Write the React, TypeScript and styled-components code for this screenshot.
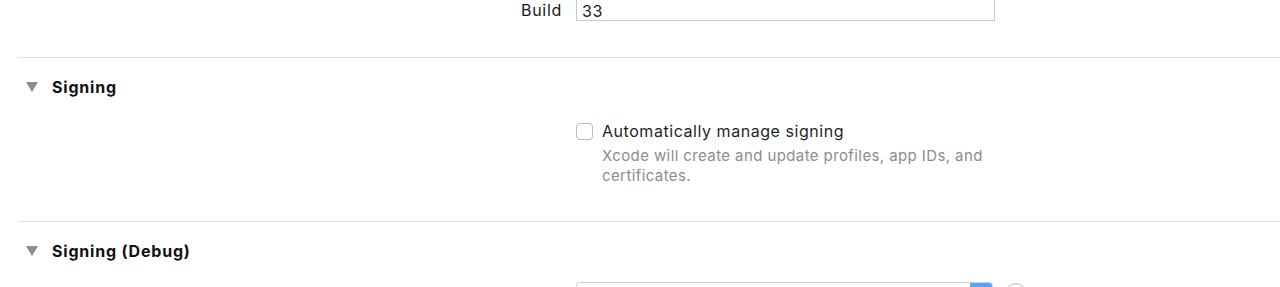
import React from "react";
import styled, { createGlobalStyle } from "styled-components";

const Global = createGlobalStyle`
  html, body { margin: 0; padding: 0; background: #ffffff; }
  body { font-family: Inter, "Noto Sans", Roboto, sans-serif; -webkit-font-smoothing: antialiased; }
`;

const Page = styled.div`
  width: 1280px;
  height: 287px;
  overflow: hidden;
  background: #fff;
`;

const Content = styled.div`
  margin-top: -2px;
  display: flex;
  flex-direction: column;
`;

const FieldRow = styled.div`
  display: grid;
  grid-template-columns: 562px 419px;
  column-gap: 14px;
  align-items: center;
`;

const Label = styled.span`
  text-align: right;
  font-size: 16px;
  letter-spacing: 0.7px;
  color: #1a1a1a;
  padding-top: 1px;
`;

const TextField = styled.div`
  height: 23px;
  box-sizing: border-box;
  border: 1px solid #c8c8c8;
  border-top-color: #b4b4b4;
  background: #fff;
  font-size: 16px;
  letter-spacing: 0.5px;
  color: #1a1a1a;
  padding: 2px 5px 0;
  display: flex;
  align-items: center;
`;

const Divider = styled.div<{ $top: number }>`
  margin-top: ${(p) => p.$top}px;
  margin-left: 18px;
  height: 1px;
  background: #dedede;
`;

const SectionHeader = styled.div`
  height: 58px;
  display: flex;
  align-items: center;
  gap: 14px;
  padding-left: 26px;
`;

const Disclosure = styled.span`
  width: 0;
  height: 0;
  border-left: 6px solid transparent;
  border-right: 6px solid transparent;
  border-top: 10px solid #8c8c8c;
`;

const Title = styled.span`
  font-size: 16px;
  letter-spacing: 0.8px;
  font-weight: 700;
  color: #111;
`;

const OptionBlock = styled.div`
  margin-top: 6px;
  padding-left: 576px;
  display: grid;
  grid-template-columns: 17px auto;
  column-gap: 9px;
  row-gap: 5px;
  align-items: start;
`;

const Checkbox = styled.span`
  width: 17px;
  height: 17px;
  box-sizing: border-box;
  border: 1px solid #b9b9b9;
  border-radius: 4px;
  background: #fff;
  margin-top: 1px;
`;

const OptionLabel = styled.span`
  font-size: 16px;
  letter-spacing: 0.55px;
  line-height: 19px;
  color: #1f1f1f;
`;

const OptionHint = styled.span`
  grid-column: 2;
  font-size: 15px;
  line-height: 20px;
  color: #8c8c8c;
  width: 400px;
  letter-spacing: 0.4px;
`;

const PopupRow = styled.div`
  margin-top: 2px;
  padding-left: 576px;
  display: flex;
  align-items: flex-start;
  gap: 12px;
`;

const Popup = styled.div`
  width: 417px;
  height: 22px;
  box-sizing: border-box;
  border: 1px solid #cfcfcf;
  border-radius: 4px;
  background: #fff;
  display: flex;
  justify-content: flex-end;
  overflow: hidden;
`;

const PopupArrow = styled.span`
  width: 22px;
  height: 100%;
  background: #5aa2f7;
`;

const HelpButton = styled.span`
  width: 22px;
  height: 22px;
  box-sizing: border-box;
  border-radius: 50%;
  border: 1px solid #bdbdbd;
  background: #fbfbfb;
  margin-top: 1px;
`;

export default function App() {
  return (
    <Page>
      <Global />
      <Content>
        <FieldRow>
          <Label>Build</Label>
          <TextField>33</TextField>
        </FieldRow>
        <Divider $top={36} />
        <SectionHeader>
          <Disclosure />
          <Title>Signing</Title>
        </SectionHeader>
        <OptionBlock>
          <Checkbox />
          <OptionLabel>Automatically manage signing</OptionLabel>
          <OptionHint>
            Xcode will create and update profiles, app IDs, and certificates.
          </OptionHint>
        </OptionBlock>
        <Divider $top={35} />
        <SectionHeader>
          <Disclosure />
          <Title>Signing (Debug)</Title>
        </SectionHeader>
        <PopupRow>
          <Popup>
            <PopupArrow />
          </Popup>
          <HelpButton />
        </PopupRow>
      </Content>
    </Page>
  );
}
